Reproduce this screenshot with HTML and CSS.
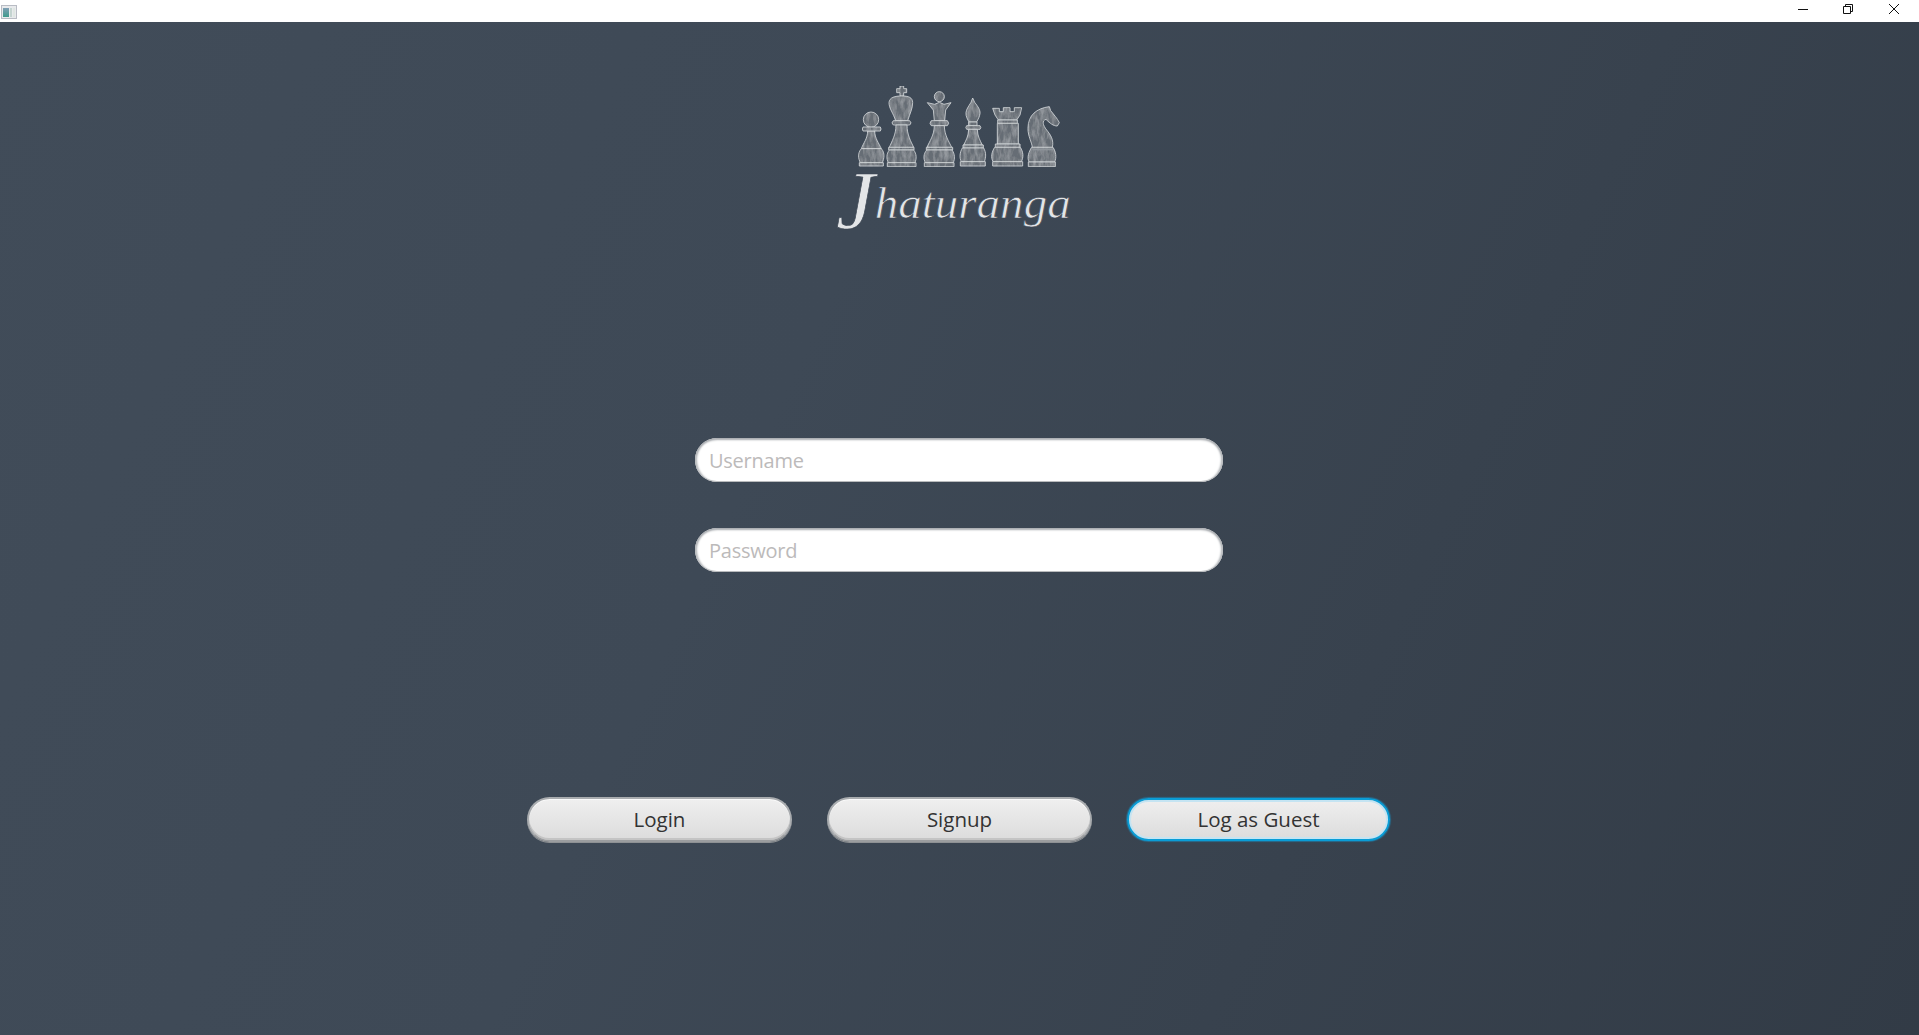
FILE: index.html
```html
<!DOCTYPE html>
<html lang="en">
<head>
<meta charset="utf-8">
<title>Jhaturanga</title>
<link rel="stylesheet" href="styles.css">
</head>
<body>
<div class="window">
  <header class="titlebar">
    <svg class="app-icon" width="16" height="14" viewBox="0 0 16 14">
      <defs><linearGradient id="ai" x1="0" y1="0" x2="0" y2="1"><stop offset="0" stop-color="#7f9fb5"/><stop offset="1" stop-color="#3f9a8c"/></linearGradient></defs>
      <rect x="0.5" y="0.5" width="15" height="13" fill="#e8eaec" stroke="#b9bcc4"/>
      <rect x="2" y="3" width="6" height="9" fill="url(#ai)"/>
      <rect x="9" y="3" width="2" height="9" fill="#c4d4d0"/>
      <rect x="12" y="3" width="2" height="9" fill="#dfe6e2"/>
    </svg>
    <div class="controls">
      <svg width="10" height="10" viewBox="0 0 10 10"><path class="glyph" d="M0 5.5H10"/></svg>
      <svg width="10" height="10" viewBox="0 0 10 10"><path class="glyph" d="M.5 2.5h7v7h-7zM2.5 2.5v-2h7v7h-2"/></svg>
      <svg width="10" height="10" viewBox="0 0 10 10"><path class="glyph" d="M0 0L10 10M10 0L0 10"/></svg>
    </div>
  </header>
  <main class="screen">
    <svg class="logo" width="320" height="190" viewBox="0 0 960 570" role="img" aria-label="Jhaturanga">
      <defs>
        <filter id="wash" x="0" y="0" width="100%" height="100%">
          <feTurbulence type="fractalNoise" baseFrequency="0.09 0.03" numOctaves="4" seed="7" result="n"/>
          <feColorMatrix in="n" type="matrix" values="0 0 0 0 0.8  0 0 0 0 0.82  0 0 0 0 0.85  0.5 0 0 0 -0.17" result="tint"/>
          <feComposite in="tint" in2="SourceAlpha" operator="in" result="clip"/>
          <feMerge><feMergeNode in="SourceGraphic"/><feMergeNode in="clip"/></feMerge>
        </filter>
      </defs>
      <g class="pieces" filter="url(#wash)">
        <!-- pawn -->
        <circle cx="213" cy="179" r="23"/>
        <path d="M203 213C203 235 190 250 184 266H244C237 250 224 235 224 213Z"/>
        <path d="M189 201H241Q245 207 241 213H189Q185 207 189 201Z"/>
        <path d="M184 266H244C256 280 252 296 247 308H181C175 296 172 280 184 266Z"/>
        <rect x="178" y="308" width="72" height="10"/>
        <!-- king -->
        <path d="M300 78H311V86H320V98H311V108H300V98H290V86H300Z"/>
        <path d="M305 108C285 108 268 112 267 128C267 145 280 160 287 182H323C330 160 338 145 338 128C338 112 325 108 305 108Z"/>
        <path d="M280 182H329Q337 189 329 195H280Q272 189 280 182Z"/>
        <path d="M288 195C288 225 275 245 268 262H341C333 245 321 225 321 195Z"/>
        <rect x="266" y="262" width="76" height="8"/>
        <path d="M268 270H341C350 282 350 296 345 308H265C259 296 259 282 268 270Z"/>
        <rect x="262" y="308" width="86" height="12"/>
        <!-- queen -->
        <circle cx="418" cy="110" r="15"/>
        <path d="M382 128L404 133L418 127L432 133L453 128L437 150L434 182H403L400 150Z"/>
        <path d="M394 182H442Q450 190 442 197H394Q386 190 394 182Z"/>
        <path d="M403 197C403 225 388 245 381 262H455C447 245 433 225 433 197Z"/>
        <rect x="379" y="262" width="79" height="8"/>
        <path d="M380 270H456C465 282 465 296 460 308H376C370 296 370 282 380 270Z"/>
        <rect x="373" y="308" width="89" height="12"/>
        <!-- bishop -->
        <path d="M518 114L524 127C534 140 541 150 540 160C539 170 534 178 530 186H507C503 178 497 170 498 158C499 148 505 140 513 127Z"/>
        <path d="M506 186H531V197H506Z"/>
        <path d="M500 197H540Q545 203 540 208H500Q495 203 500 197Z"/>
        <path d="M506 208C506 228 497 243 491 255H547C541 243 532 228 532 208Z"/>
        <rect x="489" y="255" width="61" height="9"/>
        <path d="M487 264H551C559 278 558 293 553 305H484C478 293 479 278 487 264Z"/>
        <rect x="481" y="305" width="75" height="13"/>
        <!-- rook -->
        <path d="M578 145H598V155H610V143H630V155H643V143H665L660 165L650 180H595L585 165Z"/>
        <rect x="593" y="180" width="59" height="10"/>
        <rect x="592" y="190" width="63" height="62"/>
        <rect x="586" y="252" width="74" height="10"/>
        <path d="M584 262H661C670 276 671 292 664 305H579C572 292 575 276 584 262Z"/>
        <rect x="578" y="305" width="90" height="13"/>
        <!-- knight -->
        <path d="M748 140L752 152C762 165 772 175 778 188L772 198C760 198 750 190 738 178C725 182 728 195 740 210C752 225 762 240 757 262H697C695 245 684 230 684 205C684 165 710 145 748 140Z"/>
        <path d="M695 262H759C768 276 770 292 764 306H687C681 292 686 276 695 262Z"/>
        <rect x="685" y="306" width="81" height="14"/>
      </g>
      <g class="seams">
        <path d="M697 268H759"/>
      </g>
      <text class="wordmark" x="108" y="505" textLength="704" lengthAdjust="spacingAndGlyphs"><tspan class="wordmark-j">J</tspan><tspan dy="-30">haturanga</tspan></text>
    </svg>
    <form class="fields">
      <input class="field" type="text" placeholder="Username">
      <input class="field" type="password" placeholder="Password">
    </form>
    <div class="actions">
      <button class="btn" type="button">Login</button>
      <button class="btn" type="button">Signup</button>
      <button class="btn btn-focus" type="button">Log as Guest</button>
    </div>
  </main>
</div>
</body>
</html>
```
FILE: styles.css
```css
* { box-sizing: border-box; }
html, body { margin: 0; height: 100%; overflow: hidden; }
body { font-family: "Open Sans", "Noto Sans", sans-serif; background: #3b4551; }
.window { display: flex; flex-direction: column; height: 100vh; }
.titlebar {
  flex: 0 0 22px; display: flex; align-items: center; justify-content: space-between;
  background: #fff; padding: 0 20px 0 1px;
}
.app-icon { display: block; margin-top: 1px; }
.controls { display: flex; gap: 35px; margin-top: -4px; }
.controls svg { display: block; }
.controls svg:last-child { margin-left: 1px; }
.glyph { fill: none; stroke: #111; stroke-width: 1; }
.screen {
  flex: 1; display: flex; flex-direction: column; align-items: center;
  padding: 38px 1px 0 0;
  background: linear-gradient(115deg, #414c59 0%, #3e4956 40%, #323b46 100%);
}
.logo { display: block; flex: none; margin-left: 2px; }
.pieces circle, .pieces path, .pieces rect { fill: #666d75; stroke: #d3d6d9; stroke-width: 2.5; stroke-linejoin: round; }
.seams path { fill: none; stroke: #8f959b; stroke-width: 6; }
.wordmark { font-family: "Liberation Serif", serif; font-style: italic; font-size: 135px; fill: #e3e5e7; stroke: #3d4754; stroke-width: 2; }
.wordmark-j { font-size: 250px; }
.fields { display: flex; flex-direction: column; gap: 46px; margin-top: 188px; }
.field {
  display: block; width: 528px; height: 44px; padding: 0 14px; border: 0; border-radius: 22px;
  background: #fff; outline: 0; font: 400 20px "Open Sans", "Noto Sans", sans-serif; letter-spacing: -.25px; color: #333;
  box-shadow: inset 0 3px 2px -1px #a9acb0, inset 0 -2px 0 -1px #b9bbbd, inset 3px 0 2px -1px #b5b8bb, inset -3px 0 2px -1px #b5b8bb;
}
.field::placeholder { color: #bcbaba; opacity: 1; }
.actions { display: flex; justify-content: space-between; width: 864px; margin-top: 225px; }
.btn {
  width: 265px; height: 45px; padding: 0 0 2px; border: 2px solid #a9acaf; border-bottom-color: #9b9d9f; border-radius: 23px;
  background: linear-gradient(#efefef, #dcdcdc);
  box-shadow: inset 0 1px 0 #fafafa, inset 0 -2px 0 #c4c4c4, 0 1px 0 #8e9194;
  font: 20.5px "Open Sans", "Noto Sans", sans-serif; color: #333;
}
.btn-focus {
  width: 263px; height: 43px; margin: 1px 1px 0 0; border: 2px solid #0a9dd6;
  box-shadow: 0 0 1px 1px rgba(20, 160, 220, .45), inset 0 0 0 2px #c5e4f2;
}
```
